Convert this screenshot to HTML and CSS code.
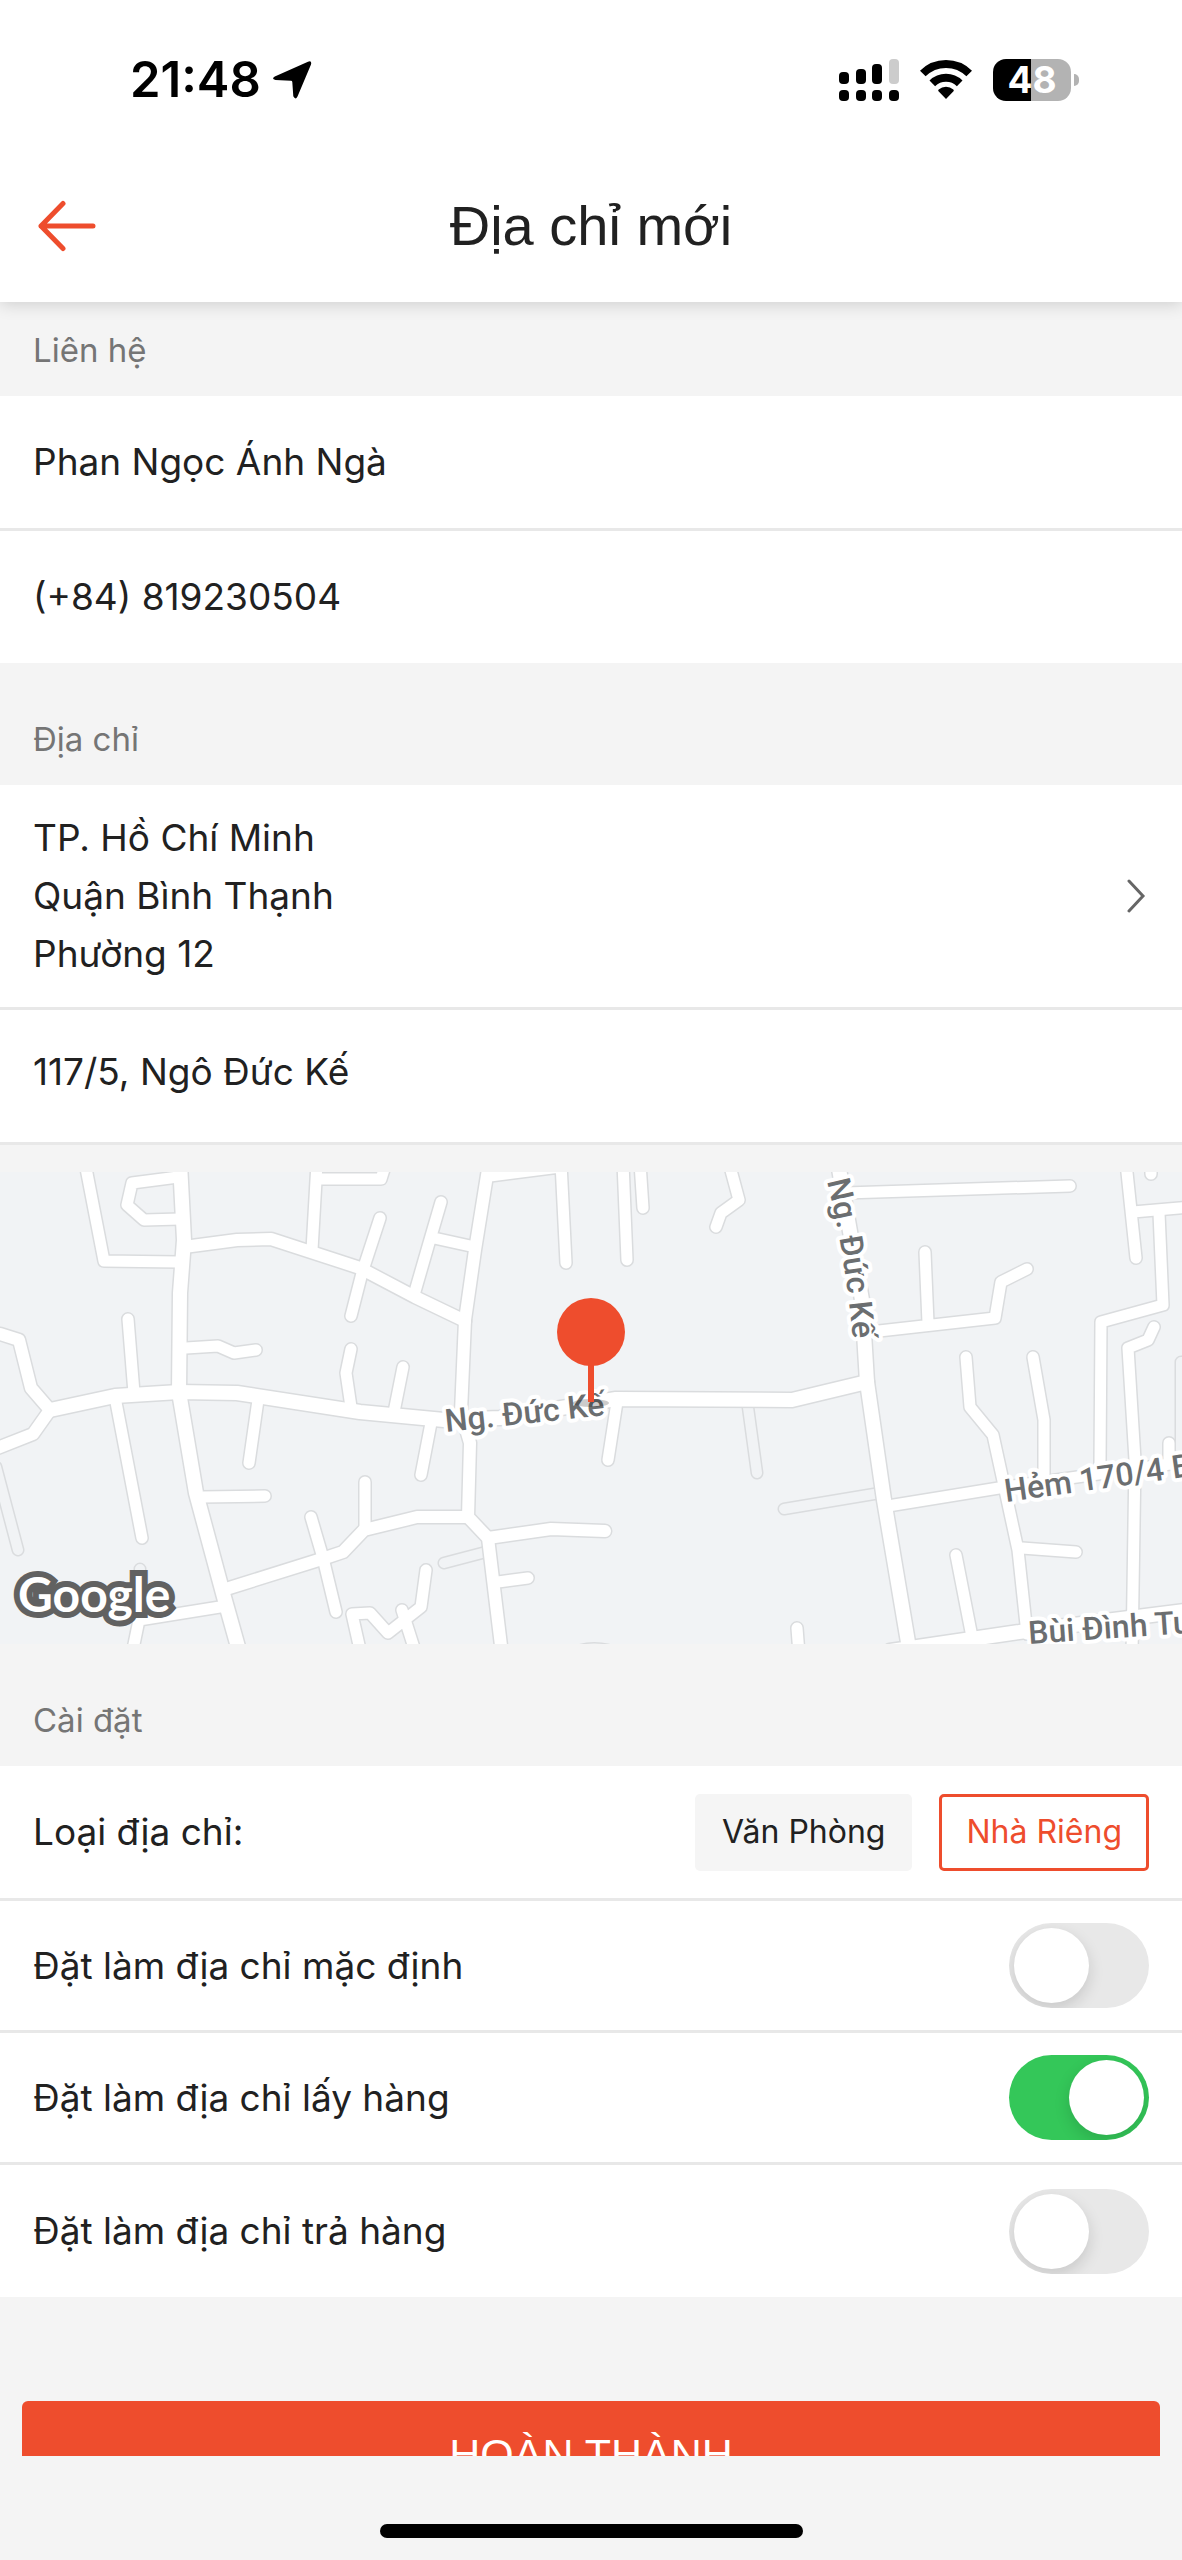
FILE: index.html
```html
<!DOCTYPE html>
<html lang="vi">
<head>
<meta charset="utf-8">
<meta name="viewport" content="width=device-width, initial-scale=1">
<title>Địa chỉ mới</title>
<link rel="stylesheet" href="styles.css">
</head>
<body>
<header class="header">
  <div class="status">
    <div class="status-left">
      <span class="clock">21:48</span>
      <svg class="location" width="40" height="38" viewBox="0 0 40 38" aria-hidden="true"><path d="M36 .8Q40 -.8 39 3.500L25.500 35.500Q23.500 39.500 21.300 35.300L20.300 21Q20.200 19.800 19 19.700L3.500 18.900Q-1 17.800 2.800 15.600Z"/></svg>
    </div>
    <div class="status-right">
      <svg width="60" height="42" viewBox="0 0 60 42" aria-hidden="true">
        <rect x="0" y="13" width="10" height="12" rx="4"/><rect x="17" y="10" width="10" height="15" rx="4"/><rect x="33" y="5" width="10" height="20" rx="4"/><rect x="50" y="0" width="10" height="25" rx="4" fill="#ccc"/>
        <rect x="0" y="31" width="10" height="11" rx="4"/><rect x="17" y="31" width="10" height="11" rx="4"/><rect x="33" y="31" width="10" height="11" rx="4"/><rect x="50" y="31" width="10" height="11" rx="4"/>
      </svg>
      <svg width="52" height="42" viewBox="0 0 52 42" aria-hidden="true">
        <g fill="none" stroke="#000" stroke-width="8"><path d="M2.800 14.500A33 33 0 0 1 49.200 14.500"/><path d="M12.300 24.300A19.500 19.500 0 0 1 39.700 24.300"/></g>
        <path d="M26 40L18.500 32.300Q17.700 31.300 18.700 30.500A11 11 0 0 1 33.300 30.500Q34.300 31.300 33.500 32.300Z"/>
      </svg>
      <div class="battery"><span class="battery-level">48</span></div>
    </div>
  </div>
  <div class="nav">
    <button class="back" type="button" aria-label="Quay lại">
      <svg width="60" height="52" viewBox="0 0 60 52" fill="none" stroke="#ee4d2d" stroke-width="5" stroke-linecap="round" stroke-linejoin="round" aria-hidden="true"><path d="M26 3.500L4 26L26 48.500M4 26H56"/></svg>
    </button>
    <h1 class="title">Địa chỉ mới</h1>
  </div>
</header>

<main class="content">
  <form class="form">
    <h2 class="section section-first">Liên hệ</h2>
    <div class="group">
      <div class="row"><input class="field" type="text" aria-label="Họ và tên" value="Phan Ngọc Ánh Ngà"></div>
      <div class="row"><input class="field" type="tel" aria-label="Số điện thoại" value="(+84) 819230504"></div>
    </div>

    <h2 class="section">Địa chỉ</h2>
    <div class="group group-address">
      <button class="row region" type="button">
        <span>TP. Hồ Chí Minh<br>Quận Bình Thạnh<br>Phường 12</span>
        <svg width="22" height="36" viewBox="0 0 22 36" fill="none" stroke="#666" stroke-width="3" stroke-linecap="round" aria-hidden="true"><path d="M2 3L16 18L2 33"/></svg>
      </button>
      <div class="row street"><input class="field" type="text" aria-label="Tên đường, số nhà" value="117/5, Ngô Đức Kế"></div>
    </div>

    <svg class="map" viewBox="0 0 1182 472" preserveAspectRatio="xMidYMid slice" role="img" aria-label="Bản đồ">
      <defs>
        <g id="alleys">
          <path d="M-4 295L18 378M444 391L486 380M747 228L757 301M784 337L880 321M1181 190V285M140 397V415M576 480Q590 474 608 478"/>
        </g>
        <g id="lanes">
          <path d="M85 -9L104 89L178 90"/>
          <path d="M178 5L132 11L127 33L144 48L180 47"/>
          <path d="M317 -9L312 78M317 7H381L386 -9"/>
          <path d="M380 46L362 101L351 144"/>
          <path d="M441 30L429 71L414 123M434 66L475 75"/>
          <path d="M490 4L560 -5M561 -9L566 91"/>
          <path d="M128 147L134 221M115 225L142 366"/>
          <path d="M186 176L218 174L234 181L256 178"/>
          <path d="M351 177L346 201L351 235M403 195L394 240"/>
          <path d="M258 228L249 291M201 325L265 324M431 251L421 303"/>
          <path d="M311 345L323 386L336 440M365 310V358"/>
          <path d="M498 410L528 406"/>
          <path d="M426 398L421 435L388 461L370 441L352 442L361 482M402 438L416 482"/>
          <path d="M132 482L139 448L226 434"/>
          <path d="M623 -9L627 88M640 -9L643 36M729 -9L739 28L721 41L716 55"/>
          <path d="M845 21L1070 14"/>
          <path d="M870 160L995 146L1001 110L1027 97M925 80L928 151"/>
          <path d="M966 185L970 235L993 263L1005 318L1018 378L1027 462"/>
          <path d="M1033 185L1044 248V306"/>
          <path d="M1126 -9L1136 86M1133 40L1192 35"/>
          <path d="M1159 41L1163 133L1101 150L1100 292"/>
          <path d="M1154 155L1148 168L1128 176L1135 288L1132 482"/>
          <path d="M1169 271V290M1151 -10V2"/>
          <path d="M617 230L608 288"/>
          <path d="M888 334L1005 315L1192 289"/>
          <path d="M1022 376L1076 380M956 383L972 465M797 456L799 482"/>
        </g>
        <g id="streets">
          <path d="M0 162L19 168L31 216L50 238L33 262L-5 277"/>
          <path d="M184 75L237 68L271 67L360 96L415 125L465 149"/>
          <path d="M226 417L325 386L343 380L364 358L417 345H468"/>
          <path d="M488 366L551 357L605 359"/>
          <path d="M489 -9L475 78L465 148L461 240L470 271L468 345L488 366L502 482"/>
        </g>
        <g id="avenues">
          <path d="M180 -9L184 68L180 121L179 220L196 321L224 425L240 482"/>
          <path d="M50 238L115 224L179 220L237 221L360 240L444 248L500 246L616 227L792 228L867 210"/>
          <path d="M838 -9L862 128L867 210L884 328L910 482"/>
          <path d="M890 479L1026 459L1192 438"/>
        </g>
        <path id="street-curve" d="M827 9Q847 90 854 180"/>
      </defs>
      <rect width="1182" height="472" fill="#f1f3f5"/>
      <use href="#alleys" class="road casing w13"/>
      <use href="#alleys" class="road alley w10"/>
      <use href="#lanes" class="road casing w14"/>
      <use href="#streets" class="road casing w15"/>
      <use href="#avenues" class="road casing w17"/>
      <use href="#lanes" class="road fill w11"/>
      <use href="#streets" class="road fill w12"/>
      <use href="#avenues" class="road fill w14"/>
      <g class="street-name">
        <text transform="translate(446 260) rotate(-6)">Ng. Đức Kế</text>
        <text><textPath href="#street-curve">Ng. Đức Kế</textPath></text>
        <text transform="translate(1006 330) rotate(-8)">Hẻm 170/4 Bùi Đình Tuý</text>
        <text transform="translate(1029 472) rotate(-4)">Bùi Đình Tuý</text>
      </g>
      <text class="map-logo" x="18" y="440">Google</text>
      <ellipse cx="591" cy="231" rx="18" ry="4" fill="#000" opacity=".2"/>
      <path d="M591 160V230" stroke="#ee4d2d" stroke-width="6"/>
      <circle cx="591" cy="160" r="34" fill="#ee4d2d"/>
    </svg>

    <h2 class="section">Cài đặt</h2>
    <div class="group">
      <div class="row">
        <span>Loại địa chỉ:</span>
        <div class="types">
          <button class="type" type="button" aria-pressed="false">Văn Phòng</button>
          <button class="type type-active" type="button" aria-pressed="true">Nhà Riêng</button>
        </div>
      </div>
      <label class="row">Đặt làm địa chỉ mặc định <input class="switch" type="checkbox" role="switch"></label>
      <label class="row">Đặt làm địa chỉ lấy hàng <input class="switch" type="checkbox" role="switch" checked></label>
      <label class="row">Đặt làm địa chỉ trả hàng <input class="switch" type="checkbox" role="switch"></label>
    </div>

    <div class="actions"><button class="submit" type="submit">HOÀN THÀNH</button></div>
  </form>
</main>

<footer class="home"><div class="home-bar"></div></footer>
</body>
</html>
```
FILE: styles.css
```css
* {
  box-sizing: border-box;
}

body {
  margin: 0;
  height: 100vh;
  display: flex;
  flex-direction: column;
  background: #f4f4f4;
  color: #212121;
  font: 37px/58px Inter, "Liberation Sans", sans-serif;
}

button,
input {
  margin: 0;
  padding: 0;
  border: 0;
  background: none;
  color: inherit;
  font: inherit;
}

svg {
  display: block;
  flex: none;
}

/* Status bar and title */
.header {
  position: relative;
  flex: none;
  background: #fff;
  box-shadow: 0 2px 16px rgba(0, 0, 0, .16);
}

.status {
  display: flex;
  align-items: center;
  justify-content: space-between;
  height: 150px;
  padding: 9px 111px 0 130px;
  color: #000;
}

.status-left {
  display: flex;
  align-items: center;
  gap: 11px;
}

.clock {
  font-size: 49px;
  font-weight: 600;
}

.status-right {
  display: flex;
  align-items: center;
  gap: 21px;
}

.battery {
  position: relative;
  width: 78px;
  height: 42px;
  border-radius: 13px;
  background: linear-gradient(90deg, #000 49%, #b3b3b3 49%);
  color: #fff;
  text-align: center;
}

.battery::after {
  content: "";
  position: absolute;
  left: 81px;
  top: 15px;
  width: 5px;
  height: 12px;
  border-radius: 0 6px 6px 0;
  background: #b3b3b3;
}

.battery-level {
  display: block;
  font-size: 37px;
  line-height: 42px;
  font-weight: 700;
}

.nav {
  display: grid;
  grid-template-columns: 60px 1fr 60px;
  align-items: center;
  height: 152px;
  padding: 0 37px;
}

.title {
  margin: 0;
  text-align: center;
  font: 400 56px/64px "Liberation Sans", sans-serif;
}

/* Form */
.content {
  flex: 1;
  min-height: 0;
  overflow-y: auto;
  scrollbar-width: none;
}

.section {
  margin: 0;
  padding: 52px 33px 22px;
  font-size: 33px;
  line-height: 48px;
  font-weight: 400;
  color: #757575;
}

.section-first {
  padding-top: 24px;
}

.group {
  background: #fff;
}

.row {
  display: flex;
  align-items: center;
  justify-content: space-between;
  width: 100%;
  min-height: 132px;
  padding: 0 33px;
}

.row + .row {
  border-top: 3px solid #e8e8e8;
}

.row:last-child {
  min-height: 135px;
}

.region {
  padding-top: 24px;
  padding-bottom: 24px;
  text-align: left;
}

.street {
  padding-bottom: 8px;
}

.group-address {
  margin-bottom: 27px;
  border-bottom: 3px solid #e8e8e8;
}

.field {
  flex: 1;
  min-width: 0;
  height: 58px;
}

.types {
  display: flex;
  gap: 27px;
}

.type {
  height: 77px;
  padding: 0 24px;
  border: 3px solid transparent;
  border-radius: 5px;
  background: #f5f5f5;
  font-size: 32px;
}

.type-active {
  border-color: #ee4d2d;
  background: #fff;
  color: #ee4d2d;
}

.switch {
  appearance: none;
  display: flex;
  width: 140px;
  height: 85px;
  padding: 5px;
  border-radius: 43px;
  background: #e8e8e8;
  overflow: hidden;
}

.switch::before {
  content: "";
  width: 75px;
  height: 75px;
  border-radius: 50%;
  background: #fff;
  box-shadow: 0 6px 16px rgba(0, 0, 0, .14);
}

.switch:checked {
  justify-content: flex-end;
  background: #34c759;
}

.actions {
  padding: 104px 22px 40px;
}

.submit {
  width: 100%;
  height: 106px;
  border-radius: 6px;
  background: #ee4d2d;
  color: #fff;
  font: 43px/56px "Liberation Sans", sans-serif;
}

/* Map */
.map {
  width: 100%;
  height: 472px;
}

.road {
  fill: none;
  stroke-linecap: round;
  stroke-linejoin: round;
}

.casing { stroke: #dadcde; }
.fill { stroke: #fff; }
.alley { stroke: #f1f3f5; }
.w10 { stroke-width: 10px; }
.w11 { stroke-width: 11px; }
.w12 { stroke-width: 12px; }
.w13 { stroke-width: 13px; }
.w14 { stroke-width: 14px; }
.w15 { stroke-width: 15px; }
.w17 { stroke-width: 17px; }

.street-name {
  font: 500 32px Roboto, sans-serif;
  fill: #6b6e70;
  stroke: #fff;
  stroke-width: 8px;
  stroke-linejoin: round;
  paint-order: stroke;
}

.map-logo {
  font: 700 48px Lato, sans-serif;
  fill: #fff;
  stroke: #616161;
  stroke-width: 12px;
  paint-order: stroke;
}

/* Home indicator */
.home {
  position: relative;
  flex: none;
  display: flex;
  justify-content: center;
  align-items: flex-end;
  height: 104px;
  padding-bottom: 22px;
  background: #f4f4f4;
}

.home-bar {
  width: 423px;
  height: 14px;
  border-radius: 7px;
  background: #000;
}
```
